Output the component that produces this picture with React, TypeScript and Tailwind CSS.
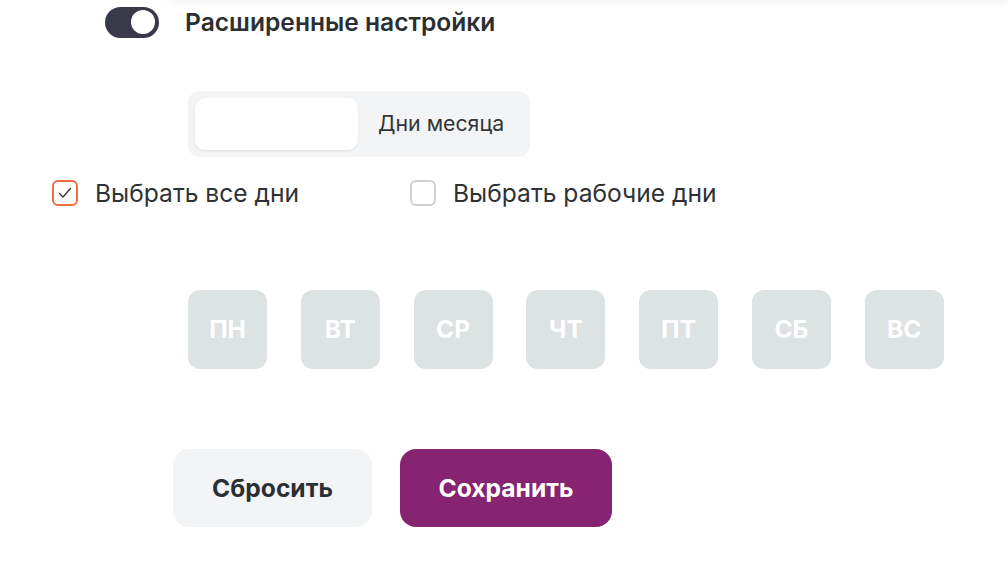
import { useState } from 'react';

const days = ['ПН', 'ВТ', 'СР', 'ЧТ', 'ПТ', 'СБ', 'ВС'];

function Checkbox({ checked, label }: { checked: boolean; label: string }) {
  return (
    <label className="flex items-center gap-[17px] cursor-pointer">
      <span
        className={`flex h-[26px] w-[26px] items-center justify-center rounded-[6px] border-2 ${
          checked ? 'border-[#f26b45]' : 'border-[#cfcfd9]'
        }`}
      >
        {checked && (
          <svg width="14" height="12" viewBox="0 0 14 12" fill="none">
            <path d="M1.5 6.5 L5 10 L12.5 1.5" stroke="#333" strokeWidth="1.3" strokeLinecap="round" strokeLinejoin="round" />
          </svg>
        )}
      </span>
      <span className="text-[24.6px] leading-[30px] text-[#2f3235]">{label}</span>
    </label>
  );
}

export default function App() {
  const [advanced, setAdvanced] = useState(true);

  return (
    <div className="relative h-[574px] w-[1008px] overflow-hidden bg-white font-['Inter',sans-serif]">
      <div className="absolute -top-[20px] left-[170px] right-0 h-[20px] shadow-[0_2px_10px_rgba(0,0,0,0.06)]" />

      <div className="flex h-[44px] items-center gap-[26px] pl-[105px]">
        <button
          onClick={() => setAdvanced(!advanced)}
          className="flex h-[31px] w-[54px] items-center justify-end rounded-full bg-[#383a4a] px-[4px]"
        >
          <span className="h-[24px] w-[24px] rounded-full bg-white" />
        </button>
        <span className="text-[24.6px] font-semibold leading-[30px] text-[#2b2f33]">Расширенные настройки</span>
      </div>

      <div className="ml-[188px] mt-[47px] flex h-[66px] w-[342px] items-center gap-[20px] rounded-[12px] bg-[#f3f4f6] px-[7px]">
        <div className="h-[52px] w-[163px] rounded-[10px] bg-white shadow-[0_1px_3px_rgba(0,0,0,0.08)]" />
        <span className="text-[21.3px] text-[#333638]">Дни месяца</span>
      </div>

      <div className="mt-[21px] flex h-[30px] items-center pl-[52px]">
        <div className="w-[358px]">
          <Checkbox checked label="Выбрать все дни" />
        </div>
        <Checkbox checked={false} label="Выбрать рабочие дни" />
      </div>

      <div className="ml-[188px] mt-[82px] flex gap-[33.8px]">
        {days.map((d) => (
          <div
            key={d}
            className="flex h-[79px] w-[79px] items-center justify-center rounded-[12px] bg-[#dde2e3] text-[24.5px] font-bold text-white"
          >
            {d}
          </div>
        ))}
      </div>

      <div className="ml-[173px] mt-[80px] flex gap-[28px]">
        <button className="h-[78px] w-[199px] rounded-[16px] bg-[#f3f4f6] text-[24.6px] font-bold text-[#2b2f33]">
          Сбросить
        </button>
        <button className="h-[78px] w-[212px] rounded-[16px] bg-[#862471] text-[24.6px] font-bold text-white">
          Сохранить
        </button>
      </div>
    </div>
  );
}
